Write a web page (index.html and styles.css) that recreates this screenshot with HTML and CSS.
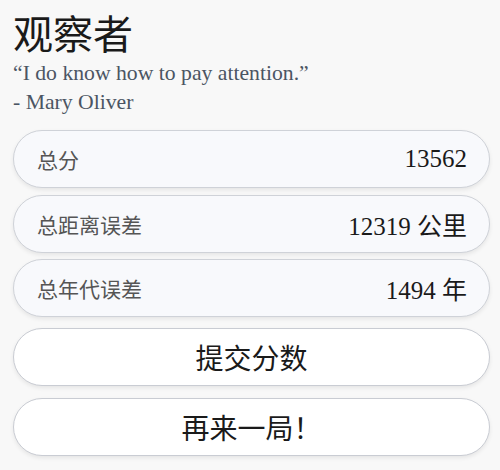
FILE: index.html
```html
<!DOCTYPE html>
<html lang="zh">
<head>
<meta charset="utf-8">
<link rel="stylesheet" href="styles.css">
</head>
<body>
<main class="page">
  <h1 class="title">观察者</h1>
  <p class="quote">“I do know how to pay attention.”</p>
  <p class="author">- Mary Oliver</p>
  <section class="stats">
    <div class="stat"><span class="label">总分</span><span class="value">13562</span></div>
    <div class="stat"><span class="label">总距离误差</span><span class="value">12319 公里</span></div>
    <div class="stat"><span class="label">总年代误差</span><span class="value">1494 年</span></div>
  </section>
  <section class="actions">
    <button class="btn">提交分数</button>
    <button class="btn">再来一局！</button>
  </section>
</main>
</body>
</html>
```
FILE: styles.css
```css
html, body { margin: 0; padding: 0; }
body {
  background: #f8f8f8;
  font-family: "Liberation Serif", "Noto Sans CJK SC", serif;
  color: #222;
  width: 500px;
  height: 470px;
  overflow: hidden;
}
.page {
  padding: 8px 10px 0 13px;
  display: flex;
  flex-direction: column;
}
.title {
  margin: 0 0 3px;
  font-family: "Noto Sans CJK SC", sans-serif;
  font-weight: 400;
  font-size: 40px;
  line-height: 48px;
  color: #1a1a1a;
}
.quote, .author {
  margin: 0;
  font-size: 21.7px;
  line-height: 29px;
  color: #4b5563;
}
.author { margin-bottom: 13px; }
.stats {
  display: flex;
  flex-direction: column;
  gap: 6.5px;
}
.stat {
  height: 58px;
  box-sizing: border-box;
  border: 1px solid #cfd2d8;
  border-radius: 30px;
  background: #f8f9fc;
  box-shadow: 0 2px 4px rgba(0,0,0,0.08);
  display: flex;
  align-items: center;
  justify-content: space-between;
  padding: 0 22px 0 23px;
}
.label {
  font-family: "Noto Sans CJK SC", sans-serif;
  font-size: 21px;
  color: #555;
}
.value {
  font-family: "Liberation Serif", "Noto Sans CJK SC", serif;
  font-size: 25px;
  color: #1a1a1a;
}
.actions {
  margin-top: 11px;
  display: flex;
  flex-direction: column;
  gap: 12px;
}
.btn {
  height: 58px;
  border: 1px solid #c9ccd3;
  border-radius: 30px;
  background: #fff;
  box-shadow: 0 2px 4px rgba(0,0,0,0.08);
  font-family: "Noto Sans CJK SC", sans-serif;
  font-size: 28px;
  color: #1a1a1a;
  padding: 0;
}
```
